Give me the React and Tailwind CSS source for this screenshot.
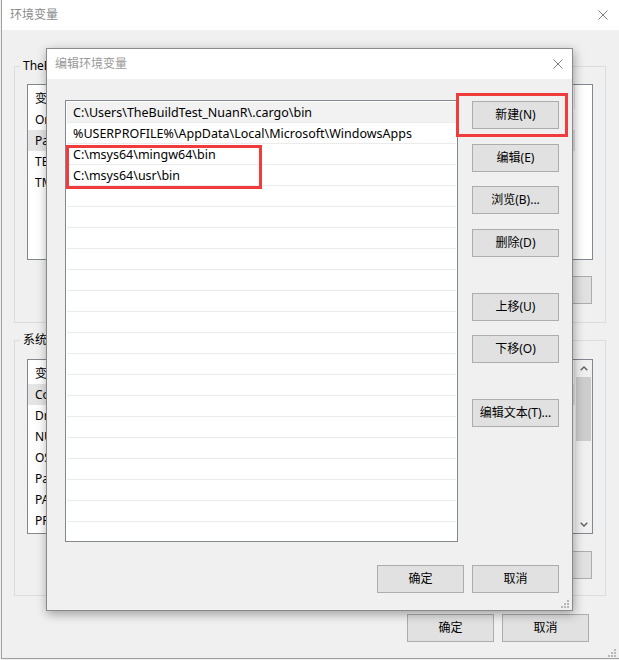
import React from 'react'

function CloseX({ color = '#808080' }) {
  return (
    <svg width="10" height="10" viewBox="0 0 10 10" className="block">
      <path d="M0.5 0.5 L9.5 9.5 M9.5 0.5 L0.5 9.5" stroke={color} strokeWidth="1" fill="none" />
    </svg>
  )
}

// windows size grip, six dots in a triangle
function Grip() {
  const dots = [[6, 0], [3, 3], [6, 3], [0, 6], [3, 6], [6, 6]]
  return (
    <svg width="8" height="8" viewBox="0 0 8 8" className="block">
      {dots.map(([x, y], i) => <rect key={i} x={x} y={y} width="2" height="2" fill="#b8b8b8" />)}
    </svg>
  )
}

function Chevron({ up }) {
  return (
    <svg width="8" height="5" viewBox="0 0 8 5" className="block">
      <path d={up ? 'M0.7 4.3 L4 1 L7.3 4.3' : 'M0.7 0.7 L4 4 L7.3 0.7'} stroke="#606060" strokeWidth="1.4" fill="none" />
    </svg>
  )
}

function Btn({ children, className = '' }) {
  return (
    <div className={`h-[28px] w-[87px] shrink-0 flex items-center justify-center bg-[#e1e1e1] border border-[#adadad] ${className}`}>
      <span className="leading-[16px]">{children}</span>
    </div>
  )
}

function VarList({ height, rows, selected, scroll }) {
  return (
    <div className={`flex border border-[#828790] bg-white ${height}`}>
      <div className="flex-1 min-w-0 overflow-hidden">
        <div className="h-[24px] w-[547px] flex items-center pl-[7px] pt-[3px] border-r border-[#e5e5e5]">
          <span className="leading-[16px]">变量</span>
        </div>
        {rows.map((r, i) => (
          <div key={r} className={`h-[21px] w-[547px] flex items-center pl-[7px] pt-[1px] ${i === selected ? 'bg-[#e5e5e5]' : ''}`}>
            <span className="leading-[16px] whitespace-nowrap">{r}</span>
          </div>
        ))}
      </div>
      {scroll && (
        <div className="w-[17px] shrink-0 flex flex-col bg-[#f0f0f0]">
          <div className="h-[17px] flex items-center justify-center"><Chevron up /></div>
          <div className="h-[64px] mx-[1px] bg-[#cdcdcd]" />
          <div className="flex-1" />
          <div className="h-[17px] flex items-center justify-center"><Chevron /></div>
        </div>
      )}
    </div>
  )
}

const pathRows = [
  'C:\\Users\\TheBuildTest_NuanR\\.cargo\\bin',
  '%USERPROFILE%\\AppData\\Local\\Microsoft\\WindowsApps',
  'C:\\msys64\\mingw64\\bin',
  'C:\\msys64\\usr\\bin',
]

export default function App() {
  const listRows = [...pathRows, ...Array(16).fill('')]

  return (
    <div className="relative w-[619px] h-[660px] overflow-hidden bg-[#f0f0f0] font-['Noto_Sans','Noto_Sans_CJK_SC',sans-serif] text-[12px] text-black">
      {/* outer window: 环境变量 */}
      <div className="ml-[1px] w-[618px] h-[659px] border-l border-b border-[#a0a0a0] flex flex-col">
        <div className="h-[30px] shrink-0 bg-white flex items-center justify-between pl-[8px] pr-[11px]">
          <span className="leading-[16px] text-[#8a8a8a]">环境变量</span>
          <CloseX />
        </div>

        <fieldset className="ml-[12px] mt-[28px] w-[592px] min-w-0 border border-[#dcdcdc] px-[12px] pt-[10px] pb-[18px]">
          <legend className="-ml-[7px] px-[3px] leading-[16px]">TheBuildTest_NuanR 的用户变量(U)</legend>
          <VarList height="h-[176px]" rows={['OneDrive', 'Path', 'TEMP', 'TMP']} selected={1} />
          <div className="mt-[16px] flex justify-end gap-[10px] pr-[1px]">
            <Btn>新建(N)...</Btn>
            <Btn>编辑(E)...</Btn>
            <Btn>删除(D)</Btn>
          </div>
        </fieldset>

        <fieldset className="ml-[12px] mt-[9px] w-[592px] min-w-0 border border-[#dcdcdc] px-[12px] pt-[11px] pb-[16px]">
          <legend className="-ml-[7px] px-[3px] leading-[16px]">系统变量(S)</legend>
          <VarList
            height="h-[175px]"
            rows={['ComSpec', 'DriverData', 'NUMBER_OF_PROCESSORS', 'OS', 'Path', 'PATHEXT', 'PROCESSOR_ARCHITECTURE']}
            selected={0}
            scroll
          />
          <div className="mt-[17px] flex justify-end gap-[10px] pr-[1px]">
            <Btn>新建(W)...</Btn>
            <Btn>编辑(I)...</Btn>
            <Btn>删除(L)</Btn>
          </div>
        </fieldset>

        <div className="mt-[18px] flex justify-end gap-[8px] pr-[30px]">
          <Btn>确定</Btn>
          <Btn>取消</Btn>
        </div>
      </div>
      <div className="absolute left-[608px] top-[649px]"><Grip /></div>

      {/* dialog: 编辑环境变量 */}
      <div className="absolute left-[46px] top-[48px] w-[527px] h-[563px] border border-[#8a8a8a] bg-[#f0f0f0] shadow-[1px_3px_10px_rgba(0,0,0,0.35)] flex flex-col">
        <div className="h-[30px] shrink-0 bg-white flex items-center justify-between pl-[8px] pr-[9px]">
          <span className="leading-[16px] text-[#999999]">编辑环境变量</span>
          <CloseX />
        </div>

        <div className="flex pl-[18px] pt-[21px]">
          <div className="w-[393px] h-[442px] border border-[#828790] bg-white p-[1px]">
            {listRows.map((r, i) => (
              <div key={i} className={`h-[21px] flex items-center pl-[6px] pt-[2px] border-b border-[#ebebeb] ${i === 0 ? 'bg-[#f2f2f2]' : ''}`}>
                <span className="leading-[16px] text-[12.5px] whitespace-nowrap">{r}</span>
              </div>
            ))}
          </div>
          <div className="ml-[14px] pt-[1px] flex flex-col">
            <Btn>新建(N)</Btn>
            <Btn className="mt-[15px]">编辑(E)</Btn>
            <Btn className="mt-[14px]">浏览(B)...</Btn>
            <Btn className="mt-[15px]">删除(D)</Btn>
            <Btn className="mt-[36px]">上移(U)</Btn>
            <Btn className="mt-[14px]">下移(O)</Btn>
            <Btn className="mt-[36px]">编辑文本(T)...</Btn>
          </div>
        </div>

        <div className="mt-[23px] flex justify-end gap-[8px] pr-[13px]">
          <Btn>确定</Btn>
          <Btn>取消</Btn>
        </div>
        <div className="absolute left-[514px] top-[551px]"><Grip /></div>
      </div>

      {/* red annotation boxes */}
      <div className="absolute left-[456px] top-[93px] w-[112px] h-[44px] border-[3px] border-[#f03c3c]" />
      <div className="absolute left-[66px] top-[145px] w-[196px] h-[44px] border-[3px] border-[#f03c3c]" />
    </div>
  )
}
